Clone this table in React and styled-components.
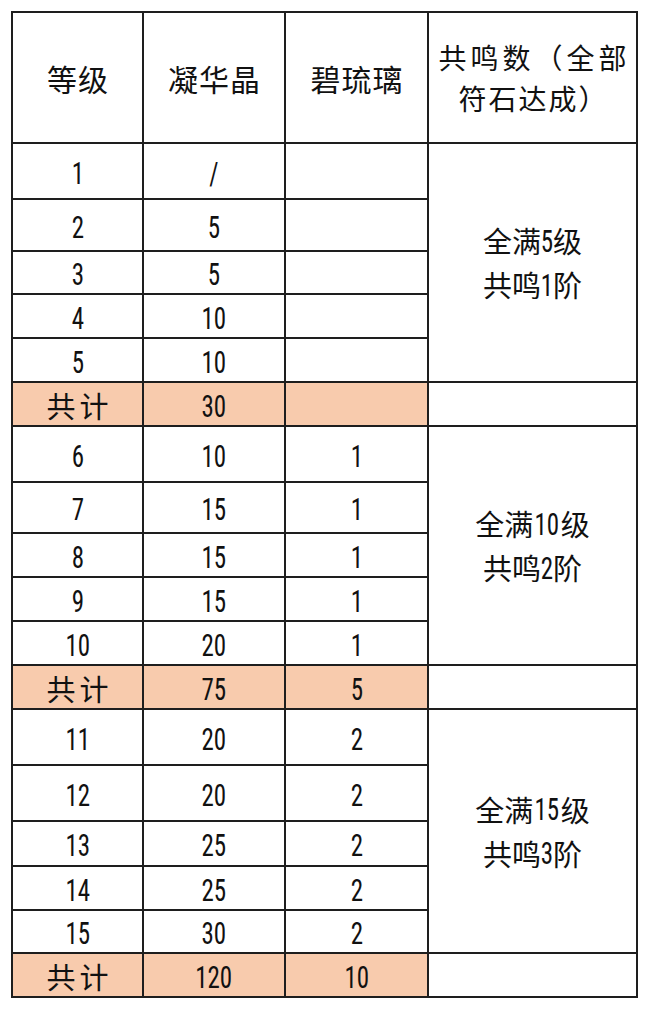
import React from 'react'
import styled, { createGlobalStyle } from 'styled-components'

const GlobalStyle = createGlobalStyle`
  html, body {
    margin: 0;
    padding: 0;
    background: #ffffff;
  }
  body {
    font-family: "Roboto Condensed", "Noto Sans CJK SC", sans-serif;
    color: #111111;
  }
`

const LINE = '#1e1e1e'

// distances between the ruled lines, header first
const header = 131
const groups = [
  {
    rows: [['1', '/', ''], ['2', '5', ''], ['3', '5', ''], ['4', '10', ''], ['5', '10', '']],
    heights: [56, 52, 43, 44, 44],
    total: ['30', ''],
    note: ['全满', '5', '级', '共鸣', '1', '阶'],
  },
  {
    rows: [['6', '10', '1'], ['7', '15', '1'], ['8', '15', '1'], ['9', '15', '1'], ['10', '20', '1']],
    heights: [56, 51, 44, 44, 44],
    total: ['75', '5'],
    note: ['全满', '10', '级', '共鸣', '2', '阶'],
  },
  {
    rows: [['11', '20', '2'], ['12', '20', '2'], ['13', '25', '2'], ['14', '25', '2'], ['15', '30', '2']],
    heights: [56, 56, 45, 44, 43],
    total: ['120', '10'],
    note: ['全满', '15', '级', '共鸣', '3', '阶'],
  },
]

const rowTracks = [header, ...groups.flatMap((g) => [...g.heights, 44])]
  .map((h) => `${h - 2}px`)
  .join(' ')

const Page = styled.div`
  padding: 11px 0 0 11px;
`

const Sheet = styled.div`
  display: grid;
  width: max-content;
  grid-template-columns: 129px 140px 141px 207px;
  grid-template-rows: ${(p) => p.$rows};
  gap: 2px;
  padding: 2px;
  background: ${LINE};
`

const Cell = styled.div`
  display: flex;
  flex-direction: column;
  align-items: center;
  justify-content: center;
  padding-top: 3px;
  background: ${(p) => (p.$total ? '#f8cbad' : '#ffffff')};
  line-height: 1;
  white-space: nowrap;
`

// narrow figures like the sheet's condensed font
const Num = styled.span`
  display: inline-block;
  font-size: 32px;
  font-weight: 400;
  transform: scaleX(0.78);
  margin: 0 ${(p) => (p.$tight ? -2 : 0)}px;
`

const HeadCell = styled(Cell)`
  padding-top: 0;
  gap: 13px;
  font-family: "Noto Sans CJK SC", sans-serif;
  font-size: ${(p) => p.$size || 30}px;
`

const HeadLine = styled.div`
  line-height: 1;
  letter-spacing: ${(p) => p.$spacing || 1}px;
  margin-right: ${(p) => -(p.$spacing || 1)}px;
`

const Han = styled.span`
  font-family: "Noto Sans CJK SC", sans-serif;
  font-size: 29px;
  letter-spacing: ${(p) => p.$spacing || 0}px;
  margin-right: ${(p) => -(p.$spacing || 0)}px;
`

const NoteCell = styled(Cell)`
  grid-row: span 5;
  padding-top: 0;
  gap: 12px;
`

const NoteLine = styled.div`
  display: flex;
  align-items: center;
  line-height: 1;
`

export default function App() {
  return (
    <Page>
      <GlobalStyle />
      <Sheet $rows={rowTracks}>
        <HeadCell>
          <HeadLine>等级</HeadLine>
        </HeadCell>
        <HeadCell>
          <HeadLine>凝华晶</HeadLine>
        </HeadCell>
        <HeadCell>
          <HeadLine>碧琉璃</HeadLine>
        </HeadCell>
        <HeadCell $size={28}>
          <HeadLine $spacing={4}>共鸣数（全部</HeadLine>
          <HeadLine $spacing={2}>符石达成）</HeadLine>
        </HeadCell>
        {groups.map((g, gi) => (
          <React.Fragment key={gi}>
            {g.rows.map((r, ri) => (
              <React.Fragment key={ri}>
                <Cell>
                  <Num>{r[0]}</Num>
                </Cell>
                <Cell>
                  <Num>{r[1]}</Num>
                </Cell>
                <Cell>
                  <Num>{r[2]}</Num>
                </Cell>
                {ri === 0 && (
                  <NoteCell>
                    <NoteLine>
                      <Han>{g.note[0]}</Han>
                      <Num $tight>{g.note[1]}</Num>
                      <Han>{g.note[2]}</Han>
                    </NoteLine>
                    <NoteLine>
                      <Han>{g.note[3]}</Han>
                      <Num $tight>{g.note[4]}</Num>
                      <Han>{g.note[5]}</Han>
                    </NoteLine>
                  </NoteCell>
                )}
              </React.Fragment>
            ))}
            <Cell $total>
              <Han $spacing={4}>共计</Han>
            </Cell>
            <Cell $total>
              <Num>{g.total[0]}</Num>
            </Cell>
            <Cell $total>
              <Num>{g.total[1]}</Num>
            </Cell>
            <Cell />
          </React.Fragment>
        ))}
      </Sheet>
    </Page>
  )
}
